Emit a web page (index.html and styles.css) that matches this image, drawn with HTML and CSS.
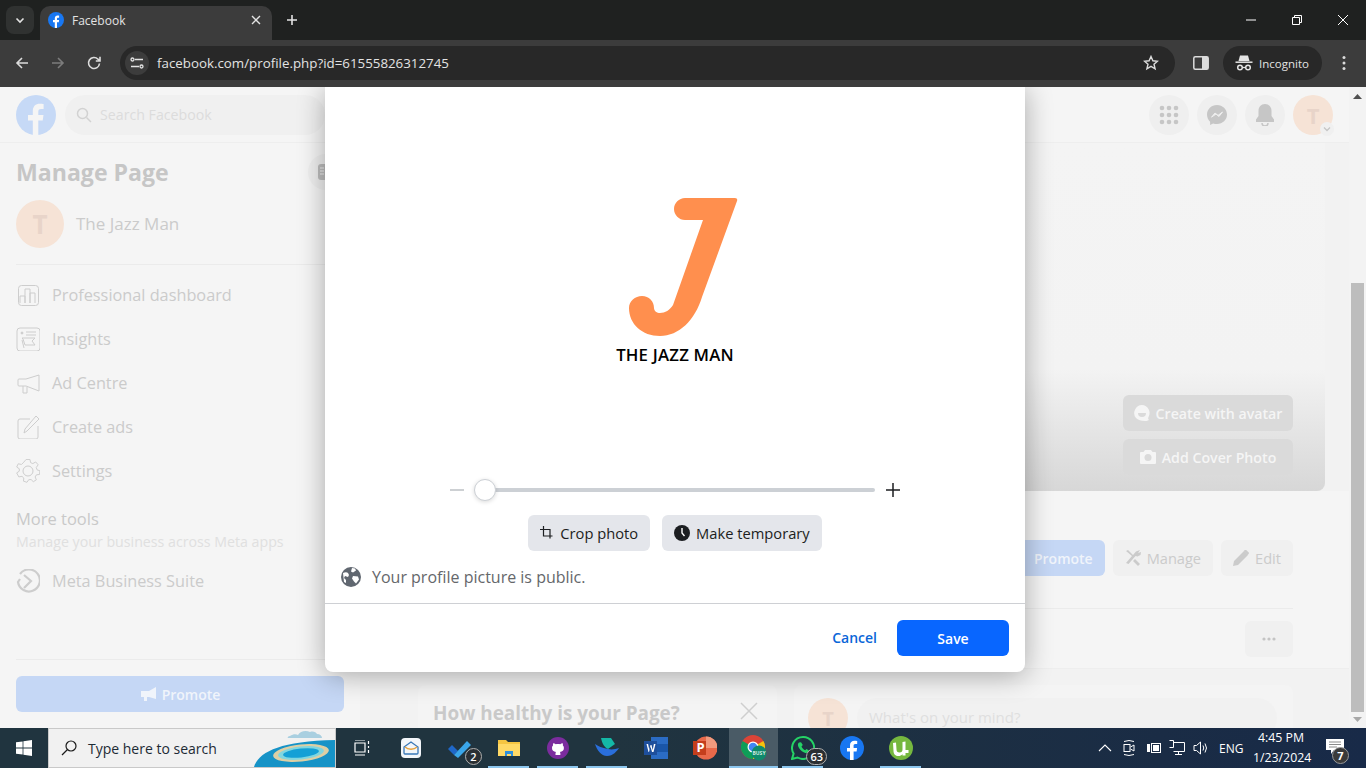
FILE: index.html
```html
<!DOCTYPE html>
<html lang="en">
<head>
<meta charset="utf-8">
<title>Facebook</title>
<link rel="stylesheet" href="styles.css">
</head>
<body>
<div class="tabstrip">
  <button class="tablist"><svg width="12" height="12" viewBox="0 0 12 12"><path d="M2.500 4.500 6 8l3.500-3.500" fill="none" stroke="#e3e3e3" stroke-width="1.600"/></svg></button>
  <div class="tab">
    <svg class="tab-fav" width="16" height="16" viewBox="0 0 16 16"><circle cx="8" cy="8" r="8" fill="#1877f2"/><path d="M6.800 16V10.200H5V8h1.800V6.400C6.800 4.500 7.900 3.500 9.600 3.500c.6 0 1.200.1 1.500.2v2h-1c-.9 0-1.100.5-1.100 1.100V8h2.100l-.3 2.200H9V16z" fill="#fff"/></svg>
    <span class="tab-title">Facebook</span>
    <svg width="10" height="10" viewBox="0 0 10 10"><path d="M1 1l8 8M9 1l-8 8" stroke="#e3e3e3" stroke-width="1.400"/></svg>
  </div>
  <svg class="newtab" width="12" height="12" viewBox="0 0 12 12"><path d="M6 1v10M1 6h10" stroke="#e3e3e3" stroke-width="1.600"/></svg>
  <div class="winctl">
    <svg width="46" height="12" viewBox="0 0 46 12"><path d="M18 6h10" stroke="#fff" stroke-width="1"/></svg>
    <svg width="46" height="12" viewBox="0 0 46 12"><path d="M18.500 3.500h7v7h-7zM20.500 3.500V1.500h7v7h-2" fill="none" stroke="#fff"/></svg>
    <svg width="46" height="12" viewBox="0 0 46 12"><path d="M18 1l10 10M28 1 18 11" stroke="#fff"/></svg>
  </div>
</div>
<div class="toolbar">
  <svg class="nav" width="16" height="16" viewBox="0 0 16 16"><path d="M14 8H3M8 3 3 8l5 5" fill="none" stroke="#dcdcdc" stroke-width="1.600"/></svg>
  <svg class="nav" width="16" height="16" viewBox="0 0 16 16"><path d="M2 8h11M8 3l5 5-5 5" fill="none" stroke="#7c7c7c" stroke-width="1.600"/></svg>
  <svg class="nav" width="16" height="16" viewBox="0 0 16 16"><path d="M13.500 8.500A5.500 5.500 0 1 1 12 4.200L14 6M14 1.800V6H9.800" fill="none" stroke="#dcdcdc" stroke-width="1.600"/></svg>
  <div class="omnibox">
    <span class="site-info"><svg width="14" height="14" viewBox="0 0 14 14"><path d="M5 3.500h8M1 10.500h8" stroke="#e3e3e3" stroke-width="1.400"/><circle cx="2.500" cy="3.500" r="1.500" fill="none" stroke="#e3e3e3" stroke-width="1.300"/><circle cx="11.500" cy="10.500" r="1.500" fill="none" stroke="#e3e3e3" stroke-width="1.300"/></svg></span>
    <span class="url">facebook.com/profile.php?id=61555826312745</span>
    <svg class="star" width="16" height="16" viewBox="0 0 16 16"><path d="M8 1.500l1.900 4.300 4.600.4-3.500 3 1.100 4.600L8 11.400l-4.100 2.400L5 9.200l-3.500-3 4.600-.4z" fill="none" stroke="#dcdcdc" stroke-width="1.400"/></svg>
  </div>
  <svg class="panel" width="16" height="16" viewBox="0 0 16 16"><rect x=".8" y="1.800" width="14.400" height="12.400" rx="1.500" fill="none" stroke="#dcdcdc" stroke-width="1.500"/><path d="M9 2h6v12H9z" fill="#dcdcdc"/></svg>
  <div class="incog">
    <svg width="18" height="16" viewBox="0 0 18 16"><path d="M5 0.500h8l1.500 5.500h-11z" fill="#e3e3e3"/><path d="M0.500 7.200h17" stroke="#e3e3e3" stroke-width="1.500"/><circle cx="5" cy="12.500" r="2.300" fill="none" stroke="#e3e3e3" stroke-width="1.500"/><circle cx="13" cy="12.500" r="2.300" fill="none" stroke="#e3e3e3" stroke-width="1.500"/><path d="M7.300 12.500h3.400" stroke="#e3e3e3" stroke-width="1.300"/></svg>
    <span>Incognito</span>
  </div>
  <svg class="kebab" width="4" height="16" viewBox="0 0 4 16"><circle cx="2" cy="2.500" r="1.500" fill="#dcdcdc"/><circle cx="2" cy="8" r="1.500" fill="#dcdcdc"/><circle cx="2" cy="13.500" r="1.500" fill="#dcdcdc"/></svg>
</div>

<div class="content">
  <div class="page">
    <header class="fb-head">
      <svg width="40" height="40" viewBox="0 0 40 40"><circle cx="20" cy="20" r="20" fill="#c6d9f6"/><path d="M16.800 40V25.500H12V20h4.800v-4c0-4.800 2.800-7.300 7-7.300 1.500 0 3 .2 3.800.4v5h-2.500c-2.300 0-2.800 1.300-2.800 2.800V20h5.200l-.8 5.500h-4.400V40z" fill="#f5f5f5"/></svg>
      <div class="fb-search">
        <svg width="16" height="16" viewBox="0 0 16 16"><circle cx="6.500" cy="6.500" r="5" fill="none" stroke="#d2d2d2" stroke-width="1.500"/><path d="M10.500 10.500 15 15" stroke="#d2d2d2" stroke-width="1.500"/></svg>
        <span>Search Facebook</span>
      </div>
      <div class="fb-icons">
        <span class="circ"><svg width="20" height="20" viewBox="0 0 20 20" fill="#c6c6c6"><circle cx="3" cy="3" r="2.300"/><circle cx="10" cy="3" r="2.300"/><circle cx="17" cy="3" r="2.300"/><circle cx="3" cy="10" r="2.300"/><circle cx="10" cy="10" r="2.300"/><circle cx="17" cy="10" r="2.300"/><circle cx="3" cy="17" r="2.300"/><circle cx="10" cy="17" r="2.300"/><circle cx="17" cy="17" r="2.300"/></svg></span>
        <span class="circ"><svg width="20" height="20" viewBox="0 0 20 20"><path d="M10 0C4.400 0 0 4.100 0 9.600c0 2.900 1.200 5.400 3.100 7.100V20l3-1.600c1.200.4 2.500.6 3.900.6 5.600 0 10-4.100 10-9.400S15.600 0 10 0z" fill="#c6c6c6"/><path d="M4.500 12.200 8 8l3 2.400L15.500 7 12 11.500 9 9z" fill="#efefef" stroke="#efefef"/></svg></span>
        <span class="circ"><svg width="20" height="22" viewBox="0 0 20 22"><path d="M10 0c-4 0-6.500 3-6.500 7v5L1 15.500V18h18v-2.500L16.500 12V7c0-4-2.500-7-6.500-7z" fill="#c6c6c6"/><path d="M7 19a3 3 0 0 0 6 0" fill="none" stroke="#c6c6c6" stroke-width="1.500"/></svg></span>
        <span class="circ avatar">T<span class="av-badge"><svg width="8" height="8" viewBox="0 0 8 8"><path d="M1 2.500 4 5.500l3-3" fill="none" stroke="#c6c6c6" stroke-width="1.300"/></svg></span></span>
      </div>
    </header>

    <div class="fb-body">
      <aside class="side">
        <div class="side-top">
          <h1 class="side-title">Manage Page</h1>
          <span class="side-toggle"><svg width="16" height="16" viewBox="0 0 16 16"><rect width="16" height="16" rx="3" fill="#bdbdbd"/><path d="M2 4h4M2 7h4M2 10h4" stroke="#f0f0f0"/></svg></span>
        </div>
        <div class="side-page"><span class="side-av">T</span><span class="side-name">The Jazz Man</span></div>
        <div class="side-rule"></div>
        <nav class="side-nav">
          <div class="side-row"><svg width="24" height="24" viewBox="0 0 24 24" fill="none" stroke="#cdcdcd"><rect x="2.500" y="2.500" width="20" height="20" rx="3"/><path d="M4 20v-7h5v7M9 20V6h5v14M14 20V10h5v10"/></svg><span>Professional dashboard</span></div>
          <div class="side-row"><svg width="24" height="24" viewBox="0 0 24 24" fill="none" stroke="#cdcdcd"><rect x="1" y="1" width="23" height="23" rx="3"/><circle cx="6" cy="6" r="1" fill="#cdcdcd"/><path d="M10 5h10M10 8h10M6 11h13l-3 3 3 4H9l-2-6zM8 21l-2-8"/></svg><span>Insights</span></div>
          <div class="side-row"><svg width="24" height="24" viewBox="0 0 24 24" fill="none" stroke="#cdcdcd"><path d="M23 4v16L10 15H3a1 1 0 0 1-1-1V9a1 1 0 0 1 1-1h7zM7 15v7h4v-6"/></svg><span>Ad Centre</span></div>
          <div class="side-row"><svg width="24" height="24" viewBox="0 0 24 24" fill="none" stroke="#cdcdcd"><path d="M14 4H4a2 2 0 0 0-2 2v16a2 2 0 0 0 2 2h16a2 2 0 0 0 2-2V11"/><path d="M8 18l1-4L20 1l3 3-12 12z"/></svg><span>Create ads</span></div>
          <div class="side-row"><svg width="24" height="24" viewBox="0 0 24 24" fill="none" stroke="#cdcdcd"><circle cx="12" cy="12" r="5"/><path d="M10 1h4l.7 3.300 2.300 1 3-1.700 2.600 3-2 2.700.8 2.500 3 1-.4 3.800-3.200.4-1.400 2.200 1.300 3-3.200 2-2.300-2.300-2.500.2-1.800 2.700-3.600-1.200.3-3.300-1.900-1.700-3.300.6L.2 15l2.700-1.800v-2.500L.2 8.900 1.800 5.500l3.300.7 1.900-1.700z" transform="translate(.5 -.5) scale(.96)"/></svg><span>Settings</span></div>
        </nav>
        <div class="more-title">More tools</div>
        <div class="more-sub">Manage your business across Meta apps</div>
        <div class="side-row meta-row"><svg width="24" height="24" viewBox="0 0 24 24" fill="none" stroke="#cdcdcd" stroke-width="2.200"><path d="M4 5a11 11 0 1 1-2 8l2-3"/><path d="M8 6l7 6-7 7"/></svg><span>Meta Business Suite</span></div>
        <div class="side-foot">
          <div class="side-promote"><svg width="16" height="14" viewBox="0 0 16 14" fill="#f0f4fb"><path d="M16 0v12L9 10H1V4h8z"/><path d="M4 10h3v4H4z"/></svg><span>Promote</span></div>
        </div>
      </aside>

      <main class="main">
        <section class="cover">
          <div class="cover-btn"><svg width="16" height="16" viewBox="0 0 16 16"><path d="M8 0a8 8 0 0 0-6 13c2 2 5 3 9 3 2 0 3-.5 4-1-1-.5-1-1.500-.5-3A8 8 0 0 0 8 0z" fill="#f5f5f5"/><path d="M4 8h8a4 4 0 0 1-8 0z" fill="#dadada"/></svg><span>Create with avatar</span></div>
          <div class="cover-btn"><svg width="16" height="14" viewBox="0 0 16 14"><path d="M5 0h6l1.500 2H15a1 1 0 0 1 1 1v10a1 1 0 0 1-1 1H1a1 1 0 0 1-1-1V3a1 1 0 0 1 1-1h2.500z" fill="#f5f5f5"/><circle cx="8" cy="7.500" r="3.500" fill="#dadada"/></svg><span>Add Cover Photo</span></div>
        </section>
        <section class="actions">
          <div class="act-row">
            <div class="act-btn act-blue"><span>Promote</span></div>
            <div class="act-btn"><svg width="16" height="16" viewBox="0 0 16 16" fill="#cbcbcb"><path d="M1 1l2-1 5 5 3-3.500L15 0l-2 3 3-1-.5 3-3 1.500-2-.5-7 8L1 13l6-7z"/><path d="M10 9l5 5-2 2-5-5z"/></svg><span>Manage</span></div>
            <div class="act-btn"><svg width="16" height="16" viewBox="0 0 16 16" fill="#cbcbcb"><path d="M0 16l1-5L11 1l4 4L5 15zM12 0l1-.2 3 3-.2 1-1 1-4-4z"/></svg><span>Edit</span></div>
          </div>
          <div class="act-rule"></div>
          <div class="act-dots"><svg width="14" height="4" viewBox="0 0 14 4" fill="#c4c4c4"><circle cx="2" cy="2" r="1.600"/><circle cx="7" cy="2" r="1.600"/><circle cx="12" cy="2" r="1.600"/></svg></div>
        </section>
        <section class="cards">
          <div class="card card-health">
            <span>How healthy is your Page?</span>
            <svg width="18" height="18" viewBox="0 0 18 18"><path d="M1 1l16 16M17 1 1 17" stroke="#cfcfcf" stroke-width="1.500"/></svg>
          </div>
          <div class="card card-post">
            <span class="post-av">T</span>
            <div class="post-input">What's on your mind?</div>
          </div>
        </section>
      </main>
    </div>
  </div>

  <div class="scrollbar">
    <svg width="9" height="5" viewBox="0 0 9 5"><path d="M0 5 4.500 0 9 5z" fill="#505050"/></svg>
    <div class="thumb-gap"></div>
    <div class="thumb"></div>
    <svg width="9" height="5" viewBox="0 0 9 5"><path d="M0 0l4.500 5L9 0z" fill="#a8a8a8"/></svg>
  </div>

  <div class="modal">
    <div class="pic">
      <svg class="j-logo" width="110" height="139" viewBox="0 0 110 139"><path d="M56 0H106Q109 0 108 3L73 99C66 122 50 138 31 138 13 138 0 126 0 110 0 103 6 98 13 98 20 98 25 103 25 110 25 113 28 115 31 115 36 115 41 112 44 107L74 22H56C50 22 45 17 45 11 45 5 50 0 56 0Z" fill="#ff8f4e"/></svg>
      <div class="j-name">THE JAZZ MAN</div>
    </div>
    <div class="zoom-row">
      <svg width="14" height="2" viewBox="0 0 14 2"><path d="M0 1h14" stroke="#bcc0c4" stroke-width="1.500"/></svg>
      <div class="track"><span class="knob"></span></div>
      <svg width="14" height="14" viewBox="0 0 14 14"><path d="M7 0v14M0 7h14" stroke="#1c1e21" stroke-width="1.500"/></svg>
    </div>
    <div class="tools">
      <div class="tool"><svg width="14" height="14" viewBox="0 0 14 14" fill="none" stroke="#1c1e21" stroke-width="1.200"><path d="M3.500 0v10h9M0 3.500h10v9"/></svg><span>Crop photo</span></div>
      <div class="tool"><svg width="16" height="16" viewBox="0 0 16 16"><circle cx="8" cy="8" r="8" fill="#1c1e21"/><path d="M8 3v5l2.500 3" fill="none" stroke="#fff" stroke-width="1.400"/></svg><span>Make temporary</span></div>
    </div>
    <div class="public">
      <svg width="20" height="20" viewBox="0 0 20 20"><circle cx="10" cy="10" r="10" fill="#606770"/><path d="M2 6c2-1 4-1 5 0l1 2-1 2-3-1-1 2 2 2v3L3 15zM11 1l3 .5 1 2-3 2-2-1zM12 9l5 .5 1 3-3 4-2-2-2-3z" fill="#fff"/></svg>
      <span>Your profile picture is public.</span>
    </div>
    <div class="modal-foot">
      <span class="cancel">Cancel</span>
      <span class="save">Save</span>
    </div>
  </div>
</div>

<footer class="taskbar">
  <div class="start"><svg width="16" height="16" viewBox="0 0 16 16" fill="#fff"><path d="M0 2.300 6.600 1.400V7.600H0zM7.400 1.300 16 0V7.600H7.400zM0 8.400H6.600V14.600L0 13.700zM7.400 8.400H16V16L7.400 14.700z"/></svg></div>
  <div class="search">
    <svg width="16" height="16" viewBox="0 0 16 16"><circle cx="10" cy="6" r="5" fill="none" stroke="#1b1b1b" stroke-width="1.200"/><path d="M6.500 9.500 1 15" stroke="#1b1b1b" stroke-width="1.300"/></svg>
    <span>Type here to search</span>
    <svg class="island" width="82" height="38" viewBox="0 0 82 38"><path d="M36 7c3-2 6-2 8-1 2-4 8-5 12-3 3-1 6 0 7 2 3 0 5 2 5 4H34c-1 0 0-2 2-2z" fill="#a9cfe0"/><path d="M0 38C4 24 24 12 82 11V38z" fill="#1693c7"/><ellipse cx="47" cy="24" rx="28" ry="8.500" fill="#ddcfa4" transform="rotate(-6 47 24)"/><ellipse cx="47" cy="24" rx="23" ry="6.500" fill="#7fd6e0" transform="rotate(-6 47 24)"/><ellipse cx="47" cy="24" rx="18" ry="4.500" fill="#14a0d6" transform="rotate(-6 47 24)"/></svg>
  </div>
  <div class="apps">
    <div class="app"><svg width="16" height="16" viewBox="0 0 16 16" fill="none" stroke="#fff" stroke-width="1.200"><path d="M1 3h10v9H1zM1 0h10M1 15h10"/><path d="M14.500 1v3M14.500 6v2M14.500 10v3"/></svg></div>
    <div class="app"><svg width="20" height="20" viewBox="0 0 20 20"><rect width="20" height="20" rx="4" fill="#f3f6fa"/><path d="M3 9l7-5 7 5v6a1 1 0 0 1-1 1H4a1 1 0 0 1-1-1z" fill="none" stroke="#3a78b8" stroke-width="1.300"/><path d="M4 9c3 3 9 3 12 0" fill="none" stroke="#e8a33d" stroke-width="1.300"/></svg></div>
    <div class="app"><svg width="24" height="20" viewBox="0 0 24 20"><path d="M0 11 4 7l6 6-4 4z" fill="#1f67c8"/><path d="M6 17 19 3l4 4L10 20z" fill="#3aa6ea"/></svg><span class="tb-badge">2</span></div>
    <div class="app on"><svg width="22" height="20" viewBox="0 0 22 20"><path d="M0 2h8l2 2h12v14H0z" fill="#f5c542"/><path d="M0 6h22v12H0z" fill="#ffd966"/><path d="M7 18v-5h8v5h-2v-2H9v2z" fill="#2f8fdb"/></svg></div>
    <div class="app on"><svg width="22" height="22" viewBox="0 0 22 22"><circle cx="11" cy="11" r="11" fill="#7b2c9e"/><path d="M8.500 18c0-1.500 0-2.500.5-3-2.500-.3-4-1.500-4-4 0-1 .3-2 1-2.500-.2-.8 0-1.700.2-2.200 1 0 1.800.5 2.500 1 1.500-.4 3-.4 4.500 0 .7-.5 1.500-1 2.500-1 .2.500.4 1.400.2 2.200.7.500 1 1.500 1 2.500 0 2.500-1.500 3.700-4 4 .5.500.5 1.500.5 3z" fill="#fff"/></svg></div>
    <div class="app on"><svg width="24" height="20" viewBox="0 0 24 20"><path d="M0 6c2 6 6 12 12 12s10-5 12-8c-3 1-7 2-11 1C7 10 3 8 0 6z" fill="#2a6fdc"/><path d="M6 0h10l4 6-7 5C9 9 7 5 6 0z" fill="#14b8a6"/></svg></div>
    <div class="app"><svg width="24" height="22" viewBox="0 0 24 22"><path d="M7 0h17v22H7z" fill="#2b6cc4"/><path d="M7 7h17v8H7z" fill="#1a56a8"/><path d="M0 4h13v14H0z" fill="#1e4f9c"/><path d="M2.500 7h1.600l1.200 6 1.200-5h1l1.200 5 1.200-6h1.600l-2 8H8L6.500 9.500 5 15H4.500z" fill="#fff"/></svg></div>
    <div class="app"><svg width="24" height="24" viewBox="0 0 24 24"><circle cx="13" cy="12" r="11.500" fill="#e8694a"/><path d="M13 12V.5A11.500 11.500 0 0 1 24.500 12z" fill="#f09a7e"/><path d="M0 5h13v14H0z" fill="#c43e1c"/><text class="ppt-p" x="3.500" y="16">P</text></svg></div>
    <div class="app active"><svg width="26" height="26" viewBox="0 0 26 26"><circle cx="12" cy="12" r="12" fill="#db4437"/><path d="M12 12 22.400 6A12 12 0 0 1 12 24z" fill="#f4c20d"/><path d="M12 24A12 12 0 0 1 1.600 6L12 12z" fill="#0f9d58"/><circle cx="12" cy="12" r="5.500" fill="#fff"/><circle cx="12" cy="12" r="4.300" fill="#4285f4"/><circle cx="18" cy="18" r="7.500" fill="#0f8a6c"/><text class="busy" x="18" y="20">BUSY</text></svg></div>
    <div class="app on"><svg width="24" height="24" viewBox="0 0 24 24"><path d="M12 1a11 11 0 0 0-9.400 16.600L1 23l5.600-1.500A11 11 0 1 0 12 1z" fill="none" stroke="#25d366" stroke-width="2"/><path d="M8 6.500c-1.500 1-1.500 3 0 5.500s4 4.500 6.500 5c2 .3 3.500-1 3.500-2.500l-2.500-1.500-1.300 1.300c-1.500-.5-3-2-3.700-3.700L11.800 9 10 6.300z" fill="#25d366"/></svg><span class="tb-badge wide">63</span></div>
    <div class="app"><svg width="24" height="24" viewBox="0 0 24 24"><circle cx="12" cy="12" r="12" fill="#1877f2"/><path d="M10 24V15.500H7V12h3V9.300C10 6.300 11.800 4.700 14.500 4.700c1.300 0 2.300.1 2.700.2v3.100h-1.800c-1.500 0-1.800.7-1.800 1.800V12h3.500l-.5 3.500h-3V24z" fill="#fff"/></svg></div>
    <div class="app on"><svg width="24" height="24" viewBox="0 0 24 24"><circle cx="12" cy="12" r="12" fill="#76b83f"/><path d="M4 7l3-.5.500 7c0 2 1 3 3 3s3-1 3-3V6l3-.5v8.500h3v3h-3v2.500h-3V18c-1 1.500-2.500 2-4 2-3 0-5-2-5-5z" fill="#fff"/></svg></div>
  </div>
  <div class="tray">
    <span class="slot"><svg width="14" height="8" viewBox="0 0 14 8"><path d="M1 7l6-6 6 6" fill="none" stroke="#fff" stroke-width="1.100"/></svg></span>
    <span class="slot"><svg width="12" height="16" viewBox="0 0 12 16" fill="none" stroke="#fff"><path d="M1 1.500q5-2 10 0M1 14.500q5 2 10 0"/><rect x="1" y="4.500" width="6" height="7"/><path d="M7.500 7l3.500-2v6L7.500 9"/></svg></span>
    <span class="slot"><svg width="16" height="12" viewBox="0 0 16 12" fill="#fff"><path d="M0 4h2M0 8h2M2 2h3v8H2z"/><rect x="6.500" y="1.500" width="9" height="9" fill="none" stroke="#fff"/><rect x="8" y="3" width="6" height="6"/></svg></span>
    <span class="slot"><svg width="16" height="16" viewBox="0 0 16 16" fill="none" stroke="#fff"><path d="M4.500 2.500h11v9H4.500M.5.500h4v7h-4M9.500 11.500v3M6 14.500h7"/></svg></span>
    <span class="slot"><svg width="16" height="16" viewBox="0 0 16 16" fill="none" stroke="#fff"><path d="M1 5.500h2.500L7.500 2v12l-4-3.500H1zM10 5.500q1.500 2.500 0 5M12 3.500q3 4.500 0 9"/></svg></span>
    <span class="lang">ENG</span>
    <div class="clock"><div>4:45 PM</div><div>1/23/2024</div></div>
    <div class="notif"><svg width="18" height="15" viewBox="0 0 18 15"><path d="M0 0h18v11H8l-3 4v-4H0z" fill="#fff"/><path d="M3 3h12M3 5.500h12M3 8h8" stroke="#8a8a8a"/></svg><span class="notif-num">7</span></div>
  </div>
</footer>
</body>
</html>
```
FILE: styles.css
```css
* { box-sizing: border-box; }
html, body { margin: 0; height: 100%; overflow: hidden; }
body { width: 1366px; height: 768px; display: flex; flex-direction: column; font-family: "Open Sans", "Noto Sans", sans-serif; background: #f5f5f5; }
h1 { margin: 0; }

/* browser chrome */
.tabstrip { height: 40px; flex: none; background: #1f2120; display: flex; align-items: flex-end; padding-left: 6px; }
.tablist { width: 28px; height: 28px; margin-bottom: 6px; border: 0; border-radius: 8px; background: #303231; display: flex; align-items: center; justify-content: center; padding: 0; }
.tab { width: 232px; height: 34px; margin-left: 6px; background: #3c3c3c; border-radius: 10px 10px 0 0; display: flex; align-items: center; padding: 0 11px 6px 8px; color: #e3e3e3; }
.tab-fav { flex: none; }
.tab-title { flex: 1; margin-left: 8px; font-size: 12px; }
.newtab { margin: 0 0 14px 14px; }
.winctl { margin-left: auto; margin-bottom: 14px; display: flex; }
.toolbar { height: 47px; flex: none; background: #3c3c3c; display: flex; align-items: center; padding: 0 0 1px 14px; }
.nav { margin-right: 20px; flex: none; }
.nav:nth-child(3) { margin-right: 18px; }
.omnibox { width: 1055px; height: 34px; border-radius: 17px; background: #282828; display: flex; align-items: center; padding: 0 16px 0 5px; flex: none; }
.site-info { width: 24px; height: 24px; border-radius: 50%; background: #3c3c3c; display: flex; align-items: center; justify-content: center; }
.url { margin-left: 8px; font-size: 13.330px; color: #e3e3e3; }
.star { margin-left: auto; }
.panel { margin-left: 18px; flex: none; }
.incog { width: 99px; height: 34px; margin-left: 14px; border-radius: 17px; background: #282828; display: flex; align-items: center; padding-left: 12px; gap: 6px; color: #e3e3e3; font-size: 11.500px; flex: none; }
.kebab { margin-left: 20px; flex: none; }

/* page behind the dialog */
.content { flex: 1; min-height: 0; display: flex; position: relative; overflow: hidden; }
.page { width: 1349px; flex: none; display: flex; flex-direction: column; }
.fb-head { height: 56px; flex: none; border-bottom: 1px solid #eeeeee; display: flex; align-items: center; padding: 0 16px; }
.fb-search { margin-left: 9px; width: 260px; height: 40px; border-radius: 20px; background: #f0f0f0; display: flex; align-items: center; gap: 8px; padding-left: 11px; font-size: 14.200px; color: #dcdcdc; }
.fb-icons { margin-left: auto; display: flex; gap: 8px; }
.circ { width: 40px; height: 40px; border-radius: 50%; background: #efefef; display: flex; align-items: center; justify-content: center; position: relative; }
.avatar { background: #f6e3d6; color: #e8d4c9; font-size: 22px; font-weight: 700; }
.av-badge { position: absolute; right: -1px; bottom: -1px; width: 14px; height: 14px; border-radius: 50%; background: #f0f0f0; display: flex; align-items: center; justify-content: center; }
.fb-body { flex: 1; min-height: 0; display: flex; }

.side { width: 360px; flex: none; padding: 0 16px; display: flex; flex-direction: column; color: #c9c9c9; }
.side-top { margin-top: 13px; height: 32px; display: flex; align-items: center; justify-content: space-between; }
.side-title { font-size: 23.100px; line-height: 30px; font-weight: 700; color: #c6c6c6; }
.side-toggle { width: 36px; height: 36px; border-radius: 50%; background: #efefef; display: flex; align-items: center; justify-content: center; flex: none; }
.side-page { margin-top: 12px; display: flex; align-items: center; gap: 12px; font-size: 17px; color: #cbcbcb; }
.side-name { margin-bottom: 2px; }
.side-av { width: 48px; height: 48px; border-radius: 50%; background: #f6e3d6; color: #e8d4c9; font-size: 26px; font-weight: 700; display: flex; align-items: center; justify-content: center; }
.side-rule { margin-top: 16px; margin-bottom: 8px; height: 1px; background: #ebebeb; }
.side-row { height: 44px; display: flex; align-items: center; gap: 12px; font-size: 16.300px; color: #cbcbcb; }
.more-title { margin-top: 16px; font-size: 16.500px; line-height: 20px; color: #c9c9c9; }
.more-sub { margin-top: 4px; font-size: 14.200px; line-height: 18px; color: #e0e0e0; }
.meta-row { margin-top: 8px; }
.side-foot { margin-top: auto; border-top: 1px solid #ebebeb; padding: 16px 0; }
.side-promote { height: 36px; border-radius: 6px; background: #c5d7f5; display: flex; align-items: center; justify-content: center; gap: 6px; color: #f0f4fb; font-size: 14px; font-weight: 600; }

.main { flex: 1; min-width: 0; display: flex; flex-direction: column; background: #f2f2f2; }
.cover { height: 348px; flex: none; margin: 0 24px; border-radius: 0 0 8px 8px; background: linear-gradient(#f4f4f4 0, #f3f3f3 65%, #d7d7d7 100%); display: flex; flex-direction: column; justify-content: flex-end; align-items: flex-end; gap: 8px; padding: 0 32px 16px 0; }
.cover-btn { width: 170px; height: 36px; border-radius: 6px; background: #dadada; display: flex; align-items: center; justify-content: center; gap: 6px; color: #f5f5f5; font-size: 14.200px; font-weight: 600; }
.actions { height: 178px; flex: none; background: #f5f5f5; border-bottom: 1px solid #eeeeee; margin-bottom: 16px; padding: 49px 56px 0 0; display: flex; flex-direction: column; align-items: flex-end; }
.act-row { display: flex; gap: 8px; }
.act-btn { height: 36px; padding: 0 12px; border-radius: 6px; background: #f0f0f0; display: flex; align-items: center; gap: 6px; color: #cbcbcb; font-size: 14.600px; }
.act-btn:nth-child(2) { padding-right: 12px; }
.act-blue { background: #c5d7f5; color: #f0f4fb; font-weight: 600; width: 118px; justify-content: flex-end; font-size: 14px; }
.act-rule { width: 100%; height: 1px; margin-top: 32px; background: #ebebeb; }
.act-dots { width: 48px; height: 36px; margin-top: 12px; border-radius: 6px; background: #f0f0f0; display: flex; align-items: center; justify-content: center; }
.cards { display: flex; justify-content: flex-end; gap: 17px; padding-right: 56px; flex: 1; }
.card { background: #f4f4f4; border-radius: 8px 8px 0 0; }
.card-health { width: 359px; display: flex; justify-content: space-between; padding: 15px 19px 0 15px; align-items: flex-start; font-size: 18.900px; font-weight: 700; color: #c9c9c9; }
.card-health svg { margin-top: 2px; }
.card-post { width: 499px; padding: 13px 16px 0 14px; display: flex; gap: 9px; }
.post-av { width: 40px; height: 40px; border-radius: 50%; background: #f6e3d6; color: #e8d4c9; font-size: 20px; font-weight: 700; display: flex; align-items: center; justify-content: center; flex: none; }
.post-input { flex: 1; height: 40px; border-radius: 20px; background: #f1f1f1; padding: 9px 12px 0; font-size: 15px; color: #dfdfdf; }

.scrollbar { width: 17px; flex: none; background: #f3f3f3; display: flex; flex-direction: column; align-items: center; padding-top: 7px; }
.thumb-gap { height: 184px; flex: none; }
.thumb { width: 13px; height: 429px; background: #bdbdbd; flex: none; margin-bottom: 5px; }

/* dialog */
.modal { position: absolute; left: 325px; top: 0; width: 700px; height: 585px; background: #fff; border-radius: 0 0 8px 8px; box-shadow: 0 3px 28px rgba(0, 0, 0, .32); display: flex; flex-direction: column; }
.pic { height: 388px; flex: none; padding-top: 111px; display: flex; flex-direction: column; align-items: center; }
.j-logo { margin-left: 18px; display: block; }
.j-name { margin-top: 8px; font-size: 16.800px; line-height: 20px; font-weight: 600; color: #000; letter-spacing: .2px; }
.zoom-row { height: 30px; flex: none; display: flex; align-items: center; justify-content: center; gap: 11px; }
.track { width: 400px; height: 4px; border-radius: 2px; background: #ccd0d5; position: relative; }
.knob { position: absolute; left: -1px; top: -9px; width: 22px; height: 22px; border-radius: 50%; background: #fff; border: 1px solid #ccd0d5; box-shadow: 0 1px 4px rgba(0, 0, 0, .15); }
.tools { margin-top: 10px; height: 36px; flex: none; display: flex; justify-content: center; gap: 12px; }
.tool { height: 36px; padding: 0 12px; border-radius: 6px; background: #e4e6eb; display: flex; align-items: center; gap: 6px; font-size: 14.700px; color: #1c1e21; }
.public { height: 52px; flex: none; display: flex; align-items: center; gap: 11px; padding-left: 16px; font-size: 16px; color: #65676b; }
.modal-foot { flex: 1; border-top: 1px solid #ced0d4; padding: 16px; display: flex; justify-content: flex-end; align-items: flex-start; gap: 20px; }
.cancel { line-height: 36px; font-size: 14px; font-weight: 600; color: #0a66d8; }
.save { width: 112px; height: 36px; border-radius: 6px; background: #0866ff; color: #fff; font-size: 14px; font-weight: 600; display: flex; align-items: center; justify-content: center; }

/* taskbar */
.taskbar { height: 40px; flex: none; display: flex; background: linear-gradient(90deg, #20343f 0, #20343f 45%, #1a2c45 85%, #182a48 100%); color: #fff; }
.start { width: 48px; flex: none; display: flex; align-items: center; justify-content: center; }
.search { width: 288px; flex: none; background: #f1f1f1; border: 1px solid #c9c9c9; display: flex; align-items: center; padding-left: 12px; gap: 11px; color: #1d2b35; font-size: 14px; overflow: hidden; }
.island { margin-left: auto; align-self: flex-end; margin-right: -1px; flex: none; }
.apps { display: flex; flex: none; margin-left: 1px; }
.app { width: 49px; height: 40px; display: flex; align-items: center; justify-content: center; position: relative; }
.app.on::after, .app.active::after { content: ""; position: absolute; left: 4px; right: 4px; bottom: 0; height: 2px; background: #8cc6ee; }
.app.active { background: #4a5b66; }
.app.active::after { left: 0; right: 0; }
.tb-badge { position: absolute; right: 2px; bottom: 3px; min-width: 17px; height: 17px; padding: 0 3px; border-radius: 9px; background: #2a2f33; border: 1px solid #b0b0b0; color: #fff; font-size: 11px; font-weight: 600; display: flex; align-items: center; justify-content: center; }
.tb-badge.wide { right: 0; }
.ppt-p { font-family: "Open Sans", sans-serif; font-size: 13px; font-weight: 700; fill: #fff; }
.busy { font-family: "Open Sans", sans-serif; font-size: 5px; font-weight: 700; fill: #cfe8df; text-anchor: middle; }
.tray { flex: 1; display: flex; align-items: center; justify-content: flex-end; padding-right: 17px; }
.slot { width: 24px; height: 40px; flex: none; display: flex; align-items: center; justify-content: center; }
.lang { width: 24px; margin-left: 6px; font-size: 12px; flex: none; white-space: nowrap; }
.clock { margin-left: 10px; width: 56px; flex: none; text-align: center; font-size: 12.300px; line-height: 20px; white-space: nowrap; }
.notif { margin-left: 12px; width: 28px; height: 40px; flex: none; position: relative; display: flex; align-items: center; justify-content: center; }
.notif svg { margin-top: -4px; }
.notif-num { position: absolute; left: 11px; top: 19px; width: 17px; height: 17px; border-radius: 50%; background: #3a3a3a; border: 1px solid #999; font-size: 11px; font-weight: 700; display: flex; align-items: center; justify-content: center; }
```
